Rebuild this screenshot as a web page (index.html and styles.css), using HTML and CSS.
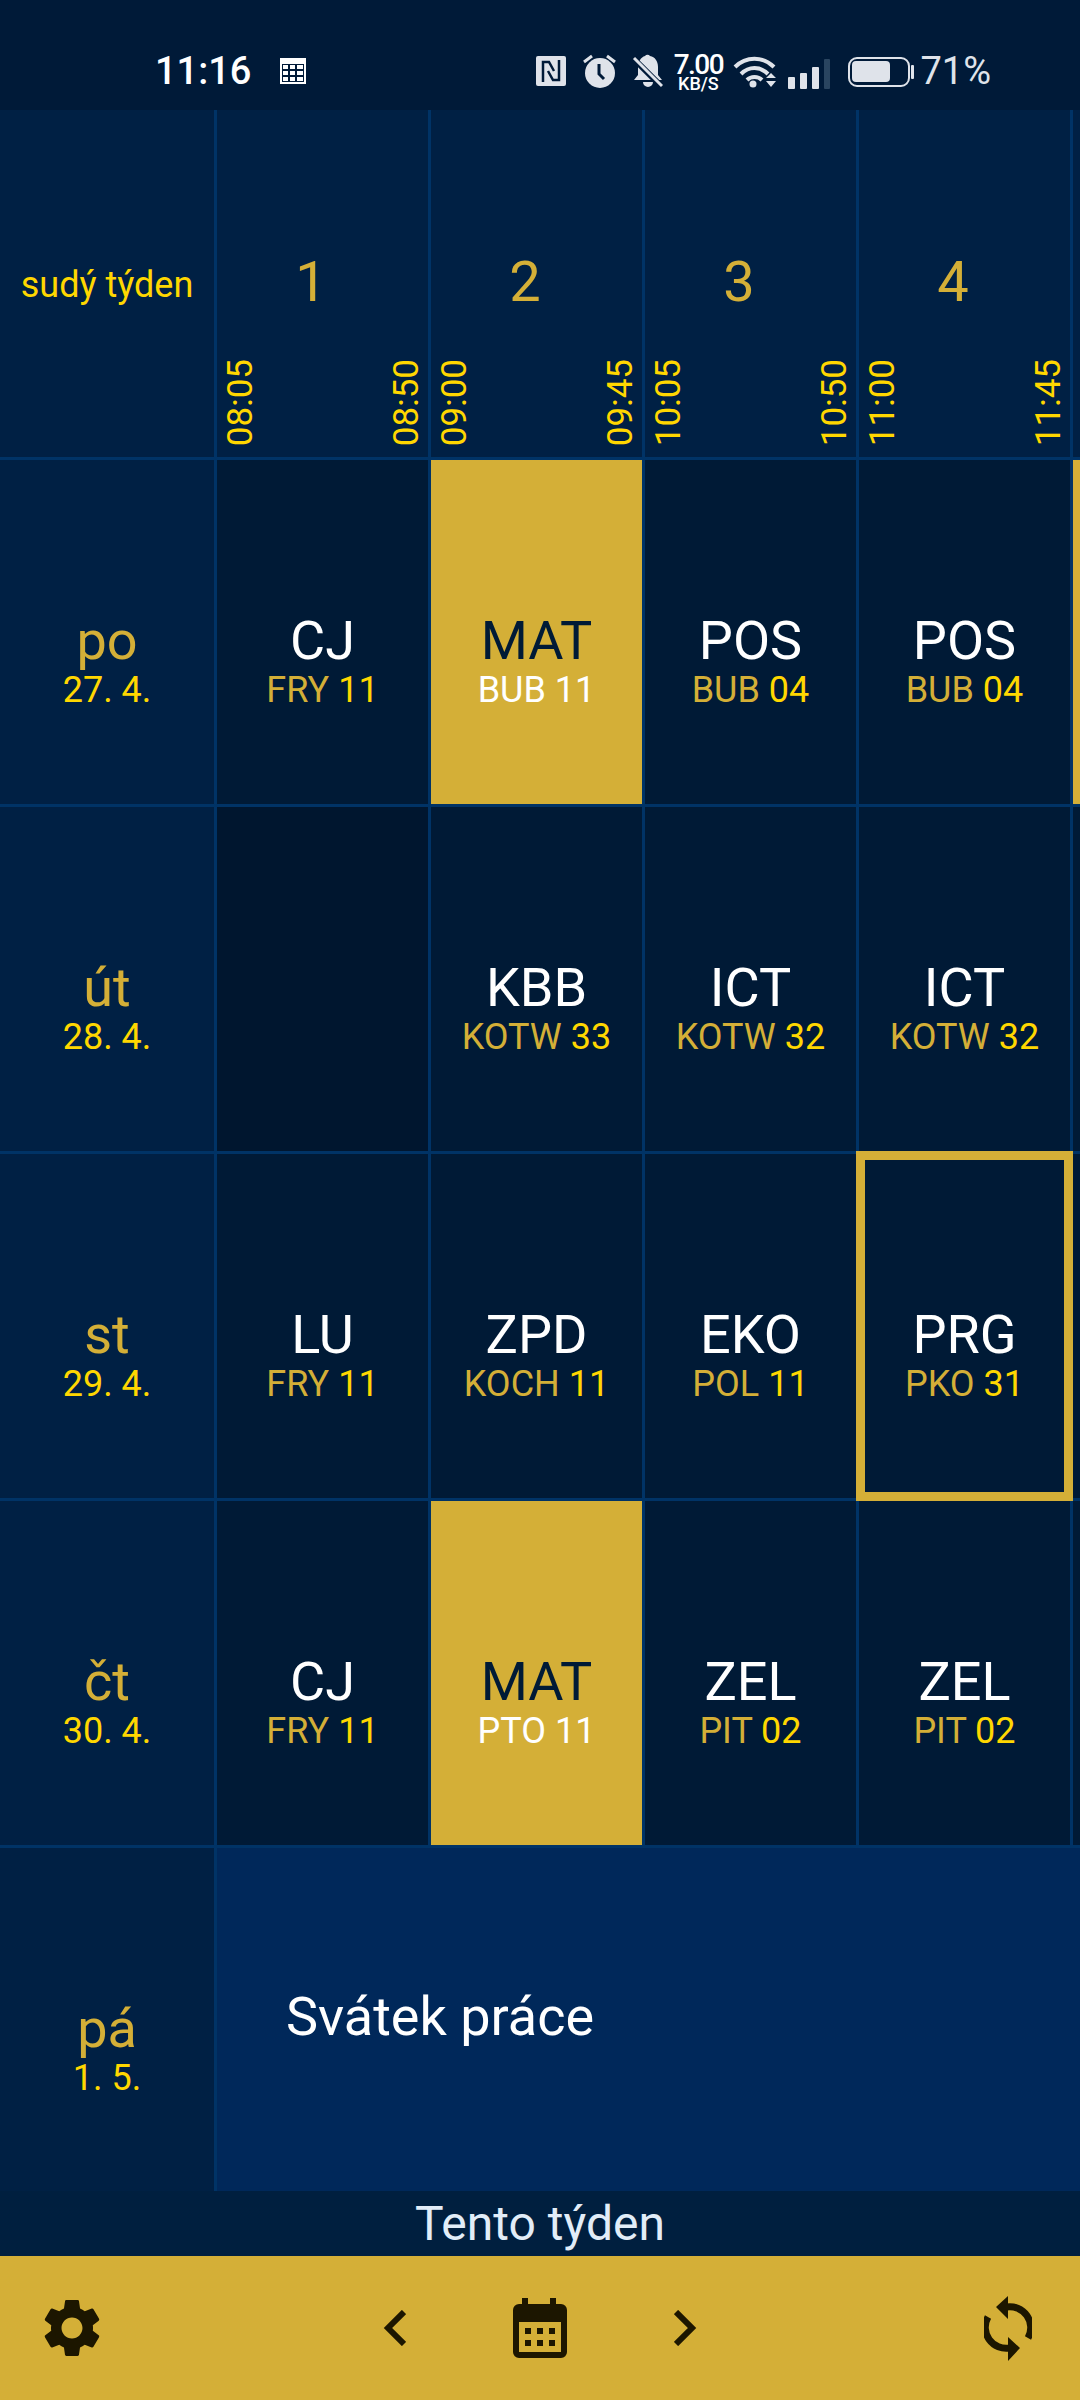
FILE: index.html
```html
<!DOCTYPE html>
<html lang="cs">
<head>
    <meta charset="UTF-8">
    <meta name="viewport" content="width=device-width, initial-scale=1.0">
    <title>Rozvrh</title>
    <link rel="stylesheet" href="styles.css">
</head>
<body>
    <div class="status">
        <span class="clock">11:16</span>
        <svg class="st-calc" width="26" height="26" viewBox="0 0 26 26">
            <path fill="#fff" fill-rule="evenodd" d="M0 0h26v26H0zM2 6v18h22V6zM3 7h5v4H3zM10 7h5v4h-5zM17 7h6v4h-6zM3 13h5v4H3zM10 13h5v4h-5zM17 13h6v4h-6zM3 19h5v4H3zM10 19h5v4h-5zM17 19h6v4h-6z"/>
        </svg>
        <svg class="st-nfc" width="30" height="30" viewBox="0 0 30 30">
            <rect width="30" height="30" rx="2" fill="#dfe3ea"/>
            <path fill="none" stroke="#001a38" stroke-width="2.5" d="M7 26V6h6l5 9M23 4v20h-6l-5-9"/>
        </svg>
        <svg class="st-alarm" width="33" height="34" viewBox="0 0 33 34">
            <circle cx="17" cy="19" r="15" fill="#dfe3ea"/>
            <path fill="none" stroke="#dfe3ea" stroke-width="3" d="M1 8l8-6M32 8l-8-6"/>
            <path fill="none" stroke="#001a38" stroke-width="3" d="M16 10v10l5 5"/>
        </svg>
        <svg class="st-bell" width="31" height="34" viewBox="0 0 31 34">
            <path fill="#dfe3ea" d="M13 2a3 3 0 0 1 5 0c5 1 8 5 8 11v8l4 5H2l4-5v-8c0-5 3-10 7-11zM11 28h10a5 5 0 0 1-10 0z"/>
            <path stroke="#001a38" stroke-width="6" d="M1 4l29 29"/>
            <path stroke="#dfe3ea" stroke-width="3" d="M2 4l28 28"/>
        </svg>
        <div class="st-speed"><span class="speed-num">7.00</span><span class="speed-unit">KB/S</span></div>
        <svg class="st-wifi" width="45" height="33" viewBox="0 0 45 33">
            <g fill="none" stroke="#dfe3ea" stroke-width="4">
                <path d="M2 12c11-11 28-11 39 0"/>
                <path d="M8 19c8-8 19-8 27 0"/>
                <path d="M14 25c4-4 11-4 15 0"/>
            </g>
            <circle cx="20" cy="29" r="3.5" fill="#dfe3ea"/>
            <path fill="#dfe3ea" d="M33 23l5-5 5 5zM33 26h10l-5 6z"/>
        </svg>
        <svg class="st-signal" width="42" height="30" viewBox="0 0 42 30">
            <rect x="0" y="18" width="7" height="12" rx="1" fill="#dfe3ea"/>
            <rect x="12" y="14" width="7" height="16" rx="1" fill="#dfe3ea"/>
            <rect x="24" y="8" width="7" height="22" rx="1" fill="#dfe3ea"/>
            <rect x="36" y="0" width="6" height="30" rx="1" fill="#2a4560"/>
        </svg>
        <svg class="st-battery" width="66" height="30" viewBox="0 0 66 30">
            <rect x="1" y="1" width="60" height="28" rx="8" fill="none" stroke="#dfe3ea" stroke-width="2"/>
            <rect x="4" y="4" width="38" height="21" rx="4" fill="#dfe3ea"/>
            <rect x="63" y="8" width="3" height="14" rx="1" fill="#dfe3ea"/>
        </svg>
        <span class="st-pct">71%</span>
    </div>

    <div class="timetable">
        <div class="corner">sudý týden</div>
        <div class="head">
            <span class="num">1</span>
            <div class="times"><span>08:05</span><span>08:50</span></div>
        </div>
        <div class="head">
            <span class="num">2</span>
            <div class="times"><span>09:00</span><span>09:45</span></div>
        </div>
        <div class="head">
            <span class="num">3</span>
            <div class="times"><span>10:05</span><span>10:50</span></div>
        </div>
        <div class="head">
            <span class="num">4</span>
            <div class="times"><span>11:00</span><span>11:45</span></div>
        </div>
        <div class="head"></div>

        <div class="day"><span class="day-name">po</span><span class="day-date">27. 4.</span></div>
        <div class="cell"><span class="subj">CJ</span><span class="info">FRY <b>11</b></span></div>
        <div class="cell gold"><span class="subj">MAT</span><span class="info">BUB <b>11</b></span></div>
        <div class="cell"><span class="subj">POS</span><span class="info">BUB <b>04</b></span></div>
        <div class="cell"><span class="subj">POS</span><span class="info">BUB <b>04</b></span></div>
        <div class="cell gold"></div>

        <div class="day"><span class="day-name">út</span><span class="day-date">28. 4.</span></div>
        <div class="cell empty"></div>
        <div class="cell"><span class="subj">KBB</span><span class="info">KOTW <b>33</b></span></div>
        <div class="cell"><span class="subj">ICT</span><span class="info">KOTW <b>32</b></span></div>
        <div class="cell"><span class="subj">ICT</span><span class="info">KOTW <b>32</b></span></div>
        <div class="cell"></div>

        <div class="day"><span class="day-name">st</span><span class="day-date">29. 4.</span></div>
        <div class="cell"><span class="subj">LU</span><span class="info">FRY <b>11</b></span></div>
        <div class="cell"><span class="subj">ZPD</span><span class="info">KOCH <b>11</b></span></div>
        <div class="cell"><span class="subj">EKO</span><span class="info">POL <b>11</b></span></div>
        <div class="cell now"><span class="subj">PRG</span><span class="info">PKO <b>31</b></span></div>
        <div class="cell"></div>

        <div class="day"><span class="day-name">čt</span><span class="day-date">30. 4.</span></div>
        <div class="cell"><span class="subj">CJ</span><span class="info">FRY <b>11</b></span></div>
        <div class="cell gold"><span class="subj">MAT</span><span class="info">PTO <b>11</b></span></div>
        <div class="cell"><span class="subj">ZEL</span><span class="info">PIT <b>02</b></span></div>
        <div class="cell"><span class="subj">ZEL</span><span class="info">PIT <b>02</b></span></div>
        <div class="cell"></div>

        <div class="day"><span class="day-name">pá</span><span class="day-date">1. 5.</span></div>
        <div class="holiday">Svátek práce</div>
    </div>

    <div class="week-label">Tento týden</div>

    <div class="toolbar">
        <svg class="tool-gear" width="70" height="70" viewBox="0 0 24 24">
            <path fill="#1c1600" d="M19.14 12.94c.04-.3.06-.61.06-.94 0-.32-.02-.64-.07-.94l2.03-1.58c.18-.14.23-.41.12-.61l-1.92-3.32c-.12-.22-.37-.29-.59-.22l-2.39.96c-.5-.38-1.03-.7-1.62-.94l-.36-2.54c-.04-.24-.24-.41-.48-.41h-3.84c-.24 0-.43.17-.47.41l-.36 2.54c-.59.24-1.13.57-1.62.94l-2.39-.96c-.22-.08-.47 0-.59.22L2.74 8.87c-.12.21-.08.47.12.61l2.03 1.58c-.05.3-.09.63-.09.94s.02.64.07.94l-2.03 1.58c-.18.14-.23.41-.12.61l1.92 3.32c.12.22.37.29.59.22l2.39-.96c.5.38 1.03.7 1.62.94l.36 2.54c.05.24.24.41.48.41h3.84c.24 0 .44-.17.47-.41l.36-2.54c.59-.24 1.13-.56 1.62-.94l2.39.96c.22.08.47 0 .59-.22l1.92-3.32c.12-.22.07-.47-.12-.61l-2.01-1.58zM12 15.6c-1.98 0-3.6-1.62-3.6-3.6s1.62-3.6 3.6-3.6 3.6 1.62 3.6 3.6-1.62 3.6-3.6 3.6z"/>
        </svg>
        <div class="tool-nav">
            <svg width="23" height="36" viewBox="0 0 23 36">
                <path fill="none" stroke="#1c1600" stroke-width="6" d="M21 2L5 18l16 16"/>
            </svg>
            <svg width="54" height="60" viewBox="0 0 54 60">
                <path fill="#1c1600" fill-rule="evenodd" d="M9 0h6v6h22V0h6v6h5a6 6 0 0 1 6 6v42a6 6 0 0 1-6 6H6a6 6 0 0 1-6-6V12a6 6 0 0 1 6-6h3zM6 24v30h42V24zM12 30h6v6h-6zM24 30h6v6h-6zM36 30h6v6h-6zM12 42h6v6h-6zM24 42h6v6h-6zM36 42h6v6h-6z"/>
            </svg>
            <svg width="23" height="36" viewBox="0 0 23 36">
                <path fill="none" stroke="#1c1600" stroke-width="6" d="M2 2l16 16L2 34"/>
            </svg>
        </div>
        <svg class="tool-sync" width="48" height="65" viewBox="0 0 48 65">
            <g fill="none" stroke="#1c1600" stroke-width="7">
                <path d="M22 11A21 21 0 0 1 44 42"/>
                <path d="M26 52A21 21 0 0 1 4 21"/>
            </g>
            <path fill="#1c1600" d="M12 11L24 0v23zM36 52L24 41v24z"/>
        </svg>
    </div>
</body>
</html>
```

FILE: styles.css
```css
* {
    box-sizing: border-box;
}

body {
    margin: 0;
    width: 1080px;
    height: 2400px;
    overflow: hidden;
    background-color: #001f3f;
    font-family: Roboto, "Noto Sans", sans-serif;
    display: flex;
    flex-direction: column;
}

/* status bar */
.status {
    height: 110px;
    flex: none;
    padding: 32px 0 0 155px;
    display: flex;
    align-items: center;
    background-color: #001a38;
    color: #fff;
}

.clock {
    font-size: 38px;
    font-weight: 500;
    line-height: 1;
}

.st-calc { margin-left: 29px; }
.st-nfc { margin-left: 230px; }
.st-alarm { margin-left: 17px; }
.st-bell { margin-left: 16px; }
.st-speed { margin-left: 11px; }
.st-wifi { margin-left: 11px; }
.st-signal { margin: 6px 0 0 10px; }
.st-battery { margin: 2px 0 0 18px; }

.st-speed {
    width: 48px;
    display: flex;
    flex-direction: column;
    align-items: center;
    font-weight: 500;
}

.speed-num {
    font-size: 28px;
    line-height: 24px;
    letter-spacing: -1.5px;
}

.speed-unit {
    font-size: 18px;
    line-height: 13px;
}

.st-pct {
    margin-left: 6px;
    font-size: 38px;
    line-height: 1;
    color: #dfe3ea;
}

/* timetable grid, the gaps are the blue lines */
.timetable {
    height: 2081px;
    flex: none;
    display: grid;
    grid-template-columns: 214px repeat(4, 211px) 7px;
    grid-template-rows: 347px repeat(4, 344px) 343px;
    gap: 3px;
    background-color: #003366;
}

.corner {
    background-color: #002044;
    color: #ffd700;
    font-size: 36px;
    padding-top: 3px;
    display: flex;
    align-items: center;
    justify-content: center;
}

.head {
    background-color: #002044;
    display: flex;
    flex-direction: column;
    align-items: stretch;
    padding: 144px 0 11px;
}

.num {
    color: #d4af37;
    font-size: 56px;
    line-height: 56px;
    text-align: center;
    margin-right: 23px;
}

.times {
    margin-top: auto;
    display: flex;
    justify-content: space-between;
    padding: 0 3px 0 6px;
    color: #ffd700;
    font-size: 35px;
    line-height: 36px;
}

.times span {
    writing-mode: vertical-rl;
    transform: rotate(180deg);
}

.day,
.cell {
    display: flex;
    flex-direction: column;
    align-items: center;
    padding-top: 154px;
}

.day {
    background-color: #002044;
}

.cell {
    background-color: #001a36;
    color: #fff;
}

.subj,
.day-name {
    font-size: 54px;
    line-height: 54px;
}

.day-name {
    color: #d4af37;
}

.info,
.day-date {
    font-size: 36px;
    line-height: 36px;
    margin-top: 4px;
}

.day-date {
    color: #ffd700;
}

.info {
    color: #d4af37;
}

.info b {
    font-weight: 400;
    color: #ffd700;
}

.cell.gold {
    background-color: #d4af37;
    color: #001a36;
}

.cell.gold .info,
.cell.gold .info b {
    color: #fff;
}

.cell.empty {
    background-color: #00162f;
}

.cell.now {
    outline: 9px solid #d4af37;
    outline-offset: -6px;
}

.holiday {
    grid-column: 2 / 7;
    background-color: #00285a;
    color: #fff;
    font-size: 54px;
    padding: 0 0 6px 69px;
    display: flex;
    align-items: center;
}

.week-label {
    flex: 1;
    display: flex;
    align-items: center;
    justify-content: center;
    color: #e2edf8;
    font-size: 48px;
}

/* bottom bar */
.toolbar {
    height: 144px;
    flex: none;
    background-color: #d4af37;
    display: grid;
    grid-template-columns: 1fr auto 1fr;
    align-items: center;
    padding: 0 37px;
}

.tool-nav {
    display: flex;
    align-items: center;
    gap: 107px;
}

.tool-sync {
    justify-self: end;
    margin-right: 11px;
}
```
